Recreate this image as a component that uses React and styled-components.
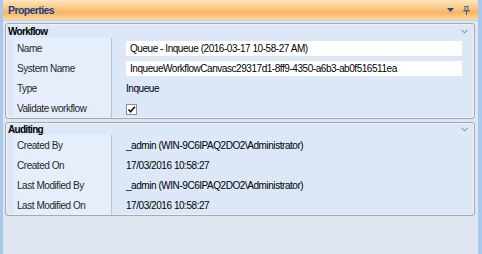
import React from "react";
import styled, { createGlobalStyle } from "styled-components";

const GlobalStyle = createGlobalStyle`
  html, body { margin: 0; padding: 0; background: #dfe6ef; }
  * { box-sizing: border-box; }
`;

const FONT = `"Liberation Sans", Arial, sans-serif`;

const Panel = styled.div`
  width: 482px;
  height: 254px;
  display: flex;
  flex-direction: column;
  background: #dfe6ef;
  border-left: 3px solid #a9c8ee;
  border-right: 4px solid #a9c8ee;
  font-family: ${FONT};
  font-size: 10px;
  letter-spacing: -0.45px;
  color: #1a1a1a;
  overflow: hidden;
`;

const Header = styled.div`
  height: 21px;
  flex: none;
  display: flex;
  align-items: center;
  padding: 0 8px 0 5px;
  background: linear-gradient(
    to bottom,
    #fde6bd 0%,
    #fcd7a2 20%,
    #fcc886 40%,
    #fab262 62%,
    #fcc684 80%,
    #fdd9a5 100%
  );
  border-bottom: 1px solid #c4d6ee;
`;

const Title = styled.div`
  flex: 1;
  font-weight: bold;
  font-size: 10.5px;
  letter-spacing: -0.6px;
  color: #15428b;
`;

const HeaderIcons = styled.div`
  display: flex;
  align-items: center;
  gap: 9px;
`;

const Body = styled.div`
  flex: 1;
  display: flex;
  flex-direction: column;
  gap: 3px;
  padding: 2px 3px 0 2px;
`;

const Group = styled.div`
  border: 1px solid #a2aab6;
  border-radius: 3px;
  background: #dce8f8;
  box-shadow: inset 0 0 0 1px #eaf1fb;
  display: flex;
  flex-direction: column;
`;

const GroupHeader = styled.div`
  height: ${(p) => p.$h}px;
  display: flex;
  align-items: center;
  justify-content: space-between;
  padding: 0 6px 0 2px;
  font-weight: bold;
  font-size: 10px;
  letter-spacing: -0.7px;
  color: #000;
`;

const Rows = styled.div`
  margin-left: 8px;
  display: grid;
  grid-template-columns: 98px 1fr;
`;

const Label = styled.div`
  height: 20px;
  display: flex;
  align-items: center;
  padding-left: 3px;
  background: #e5eefa;
  border-right: 1px solid #bcc6d3;
  color: #262626;
`;

const Value = styled.div`
  height: 20px;
  display: flex;
  align-items: center;
  padding: 0 12px 0 14px;
  color: #000;
`;

const Input = styled.div`
  flex: 1;
  height: 15px;
  background: #fff;
  display: flex;
  align-items: center;
  padding-left: 4px;
  white-space: nowrap;
  overflow: hidden;
`;

const Check = styled.div`
  width: 11px;
  height: 11px;
  margin-top: 2px;
  background: #fff;
  border: 1px solid #8e8f8f;
  display: flex;
  align-items: center;
  justify-content: center;
`;

const Chevron = () => (
  <svg width="7" height="5" viewBox="0 0 7 5">
    <path d="M0.5 0.8 L3.5 3.8 L6.5 0.8" fill="none" stroke="#8b97a7" strokeWidth="1.1" />
  </svg>
);

const DropArrow = () => (
  <svg width="7" height="4" viewBox="0 0 7 4">
    <path d="M0 0 H7 L3.5 4 Z" fill="#1f4f9a" />
  </svg>
);

const Pin = () => (
  <svg width="7" height="9" viewBox="0 0 7 9">
    <rect x="2" y="0.5" width="3" height="4" fill="none" stroke="#3d5f8f" strokeWidth="1" />
    <path d="M0 5 H7" stroke="#3d5f8f" strokeWidth="1" />
    <path d="M3.5 5 V9" stroke="#3d5f8f" strokeWidth="1" />
  </svg>
);

const Tick = () => (
  <svg width="9" height="9" viewBox="0 0 9 9">
    <path d="M1.5 4.5 L3.6 6.8 L7.8 1.8" fill="none" stroke="#111" strokeWidth="1.6" />
  </svg>
);

const PropertyGroup = ({ title, rows, headerHeight = 14 }) => (
  <Group>
    <GroupHeader $h={headerHeight}>
      <span>{title}</span>
      <Chevron />
    </GroupHeader>
    <Rows>
      {rows.map(([label, value]) => (
        <React.Fragment key={label}>
          <Label>{label}</Label>
          <Value>{value}</Value>
        </React.Fragment>
      ))}
    </Rows>
  </Group>
);

export default function App() {
  return (
    <>
      <GlobalStyle />
      <Panel>
        <Header>
          <Title>Properties</Title>
          <HeaderIcons>
            <DropArrow />
            <Pin />
          </HeaderIcons>
        </Header>
        <Body>
          <PropertyGroup
            title="Workflow"
            headerHeight={14}
            rows={[
              ["Name", <Input>Queue - Inqueue (2016-03-17 10-58-27 AM)</Input>],
              ["System Name", <Input>InqueueWorkflowCanvasc29317d1-8ff9-4350-a6b3-ab0f516511ea</Input>],
              ["Type", "Inqueue"],
              ["Validate workflow", <Check><Tick /></Check>],
            ]}
          />
          <PropertyGroup
            title="Auditing"
            headerHeight={12}
            rows={[
              ["Created By", "_admin (WIN-9C6IPAQ2DO2\\Administrator)"],
              ["Created On", "17/03/2016 10:58:27"],
              ["Last Modified By", "_admin (WIN-9C6IPAQ2DO2\\Administrator)"],
              ["Last Modified On", "17/03/2016 10:58:27"],
            ]}
          />
        </Body>
      </Panel>
    </>
  );
}
